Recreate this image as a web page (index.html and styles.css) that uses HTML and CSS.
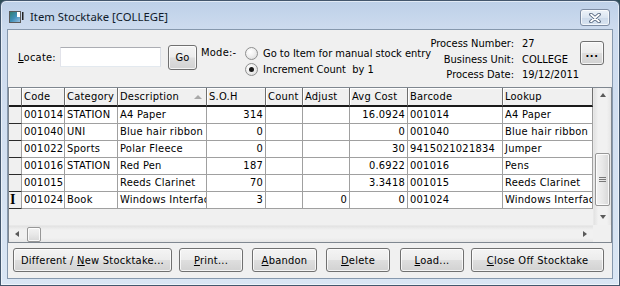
FILE: index.html
```html
<!DOCTYPE html>
<html lang="en">
<head>
    <meta charset="UTF-8">
    <title>Item Stocktake [COLLEGE]</title>
    <link rel="stylesheet" href="styles.css">
</head>
<body>

    <div class="window">

        <!-- Title bar -->
        <div class="titlebar">
            <svg class="app-icon" width="16" height="14" viewBox="0 0 16 14">
                <defs>
                    <linearGradient id="ico" x1="0" y1="0" x2="1" y2="1">
                        <stop offset="0" stop-color="#2f7d6a"/>
                        <stop offset="0.5" stop-color="#3f8fb8"/>
                        <stop offset="1" stop-color="#9fc4e6"/>
                    </linearGradient>
                </defs>
                <rect x="0.5" y="1.5" width="11" height="11" fill="url(#ico)" stroke="#5a5a5a"/>
                <rect x="8" y="2" width="3" height="5" fill="#ffffff"/>
                <rect x="13" y="2" width="1.5" height="8" fill="#222"/>
            </svg>
            <span class="title">Item Stocktake [COLLEGE]</span>
            <div class="close-btn">
                <svg width="12" height="10" viewBox="0 0 12 10">
                    <path d="M2 1.5 L10 8.5 M10 1.5 L2 8.5" stroke="#4b5d77" stroke-width="3.6" stroke-linecap="round"/>
                    <path d="M2 1.5 L10 8.5 M10 1.5 L2 8.5" stroke="#ffffff" stroke-width="1.8" stroke-linecap="round"/>
                </svg>
            </div>
        </div>

        <div class="client">

            <!-- Locate / mode / process info -->
            <div class="toolbar">
                <span class="locate-label"><u>L</u>ocate:</span>
                <div class="textbox"></div>
                <button class="btn go-btn">Go</button>
                <span class="mode-label">Mode:-</span>
                <div class="radios">
                    <div class="radio-row"><span class="radio"></span>Go to Item for manual stock entry</div>
                    <div class="radio-row"><span class="radio checked"></span>Increment Count&nbsp; by 1</div>
                </div>
                <div class="process">
                    <span class="p-label">Process Number:</span><span class="p-value">27</span>
                    <span class="p-label">Business Unit:</span><span class="p-value">COLLEGE</span>
                    <span class="p-label">Process Date:</span><span class="p-value">19/12/2011</span>
                </div>
                <button class="btn dots-btn">...</button>
            </div>

            <!-- Stock grid -->
            <div class="grid">
                <div class="grid-top">
                    <div class="grid-view">
                        <div class="row head">
                            <div class="cell ind"></div>
                            <div class="cell">Code</div>
                            <div class="cell">Category</div>
                            <div class="cell sorted">Description<span class="sort-arrow"></span></div>
                            <div class="cell">S.O.H</div>
                            <div class="cell">Count</div>
                            <div class="cell">Adjust</div>
                            <div class="cell">Avg Cost</div>
                            <div class="cell">Barcode</div>
                            <div class="cell">Lookup</div>
                        </div>
                        <div class="row">
                            <div class="cell ind"></div>
                            <div class="cell">001014</div>
                            <div class="cell">STATION</div>
                            <div class="cell">A4 Paper</div>
                            <div class="cell num">314</div>
                            <div class="cell num"></div>
                            <div class="cell num"></div>
                            <div class="cell num">16.0924</div>
                            <div class="cell">001014</div>
                            <div class="cell">A4 Paper</div>
                        </div>
                        <div class="row">
                            <div class="cell ind"></div>
                            <div class="cell">001040</div>
                            <div class="cell">UNI</div>
                            <div class="cell">Blue hair ribbon</div>
                            <div class="cell num">0</div>
                            <div class="cell num"></div>
                            <div class="cell num"></div>
                            <div class="cell num">0</div>
                            <div class="cell">001040</div>
                            <div class="cell">Blue hair ribbon</div>
                        </div>
                        <div class="row">
                            <div class="cell ind"></div>
                            <div class="cell">001022</div>
                            <div class="cell">Sports</div>
                            <div class="cell">Polar Fleece</div>
                            <div class="cell num">0</div>
                            <div class="cell num"></div>
                            <div class="cell num"></div>
                            <div class="cell num">30</div>
                            <div class="cell">9415021021834</div>
                            <div class="cell">Jumper</div>
                        </div>
                        <div class="row">
                            <div class="cell ind"></div>
                            <div class="cell">001016</div>
                            <div class="cell">STATION</div>
                            <div class="cell">Red Pen</div>
                            <div class="cell num">187</div>
                            <div class="cell num"></div>
                            <div class="cell num"></div>
                            <div class="cell num">0.6922</div>
                            <div class="cell">001016</div>
                            <div class="cell">Pens</div>
                        </div>
                        <div class="row">
                            <div class="cell ind"></div>
                            <div class="cell">001015</div>
                            <div class="cell"></div>
                            <div class="cell">Reeds Clarinet</div>
                            <div class="cell num">70</div>
                            <div class="cell num"></div>
                            <div class="cell num"></div>
                            <div class="cell num">3.3418</div>
                            <div class="cell">001015</div>
                            <div class="cell">Reeds Clarinet</div>
                        </div>
                        <div class="row">
                            <div class="cell ind"><span class="ibeam">I</span></div>
                            <div class="cell">001024</div>
                            <div class="cell">Book</div>
                            <div class="cell">Windows Interface</div>
                            <div class="cell num">3</div>
                            <div class="cell num"></div>
                            <div class="cell num">0</div>
                            <div class="cell num">0</div>
                            <div class="cell">001024</div>
                            <div class="cell">Windows Interface</div>
                        </div>
                    </div>
                    <div class="vscroll">
                        <span class="arrow up"></span>
                        <div class="vthumb"><span class="grip"></span></div>
                        <span class="arrow down"></span>
                    </div>
                </div>
                <div class="grid-bottom">
                    <div class="hscroll">
                        <span class="arrow left"></span>
                        <div class="hthumb"></div>
                        <span class="arrow right"></span>
                    </div>
                    <div class="corner"></div>
                </div>
            </div>

            <!-- Actions -->
            <div class="actions">
                <button class="btn act w-new">Different / <u>N</u>ew Stocktake...</button>
                <button class="btn act w-print"><u>P</u>rint...</button>
                <button class="btn act w-abandon"><u>A</u>bandon</button>
                <button class="btn act w-delete"><u>D</u>elete</button>
                <button class="btn act w-load"><u>L</u>oad...</button>
                <button class="btn act w-close"><u>C</u>lose Off Stocktake</button>
            </div>

        </div>
    </div>

</body>
</html>
```

FILE: styles.css
```css
* {
    margin: 0;
    padding: 0;
    box-sizing: border-box;
}

body {
    width: 620px;
    height: 286px;
    overflow: hidden;
    background: #2e4c57;
    font-family: "DejaVu Sans Condensed", "Liberation Sans", sans-serif;
    font-size: 11px;
    letter-spacing: 0.25px;
    color: #000;
}

/* Window frame */
.window {
    width: 620px;
    height: 286px;
    display: flex;
    flex-direction: column;
    padding: 0 6px 6px;
    border: 1px solid #44576d;
    border-radius: 6px 6px 0 0;
    background: linear-gradient(to bottom, #bdd0e8 0, #cddbee 28px, #dae6f4 100%);
    box-shadow: inset 0 0 0 1px rgba(255, 255, 255, 0.55);
}

.titlebar {
    height: 28px;
    flex-shrink: 0;
    display: flex;
    align-items: flex-start;
}

.app-icon {
    margin: 9px 0 0 2px;
}

.title {
    margin: 8px 0 0 5px;
    font-family: "Noto Sans", "Liberation Sans", sans-serif;
    font-size: 11.3px;
    letter-spacing: 0;
    line-height: 16px;
    color: #0f1a2a;
}

.close-btn {
    margin: 8px 3px 0 auto;
    width: 30px;
    height: 17px;
    display: flex;
    justify-content: center;
    align-items: center;
    border: 1px solid #7d8ca3;
    border-radius: 3px;
    background: linear-gradient(to bottom, #eef3f9 0%, #dbe5f1 50%, #ccd9ea 51%, #d9e4f1 100%);
    box-shadow: inset 0 0 0 1px rgba(255, 255, 255, 0.7);
}

.client {
    flex: 1;
    display: flex;
    flex-direction: column;
    border: 1px solid #8698ad;
    background: #f0f0f0;
}

/* Buttons */
.btn {
    font: inherit;
    letter-spacing: inherit;
    color: #000;
    border: 1px solid #707070;
    border-radius: 3px;
    background: linear-gradient(to bottom, #f4f4f4 0%, #ececec 48%, #dedede 52%, #d2d2d2 100%);
    box-shadow: inset 0 0 0 1px rgba(255, 255, 255, 0.75);
}

/* Toolbar */
.toolbar {
    height: 57px;
    flex-shrink: 0;
    display: flex;
    align-items: flex-start;
}

.toolbar > * {
    flex-shrink: 0;
}

.locate-label {
    width: 42px;
    margin: 21px 0 0 10px;
    line-height: 13px;
}

.textbox {
    width: 101px;
    height: 20px;
    margin-top: 17px;
    background: #fff;
    border: 1px solid;
    border-color: #abadb3 #dbdfe6 #e3e9ef #e2e3ea;
}

.go-btn {
    width: 29px;
    height: 25px;
    margin: 15px 0 0 7px;
}

.mode-label {
    width: 44px;
    margin: 16px 0 0 4px;
    line-height: 13px;
}

.toolbar > .radios {
    flex-shrink: 1;
    min-width: 0;
    margin-top: 15px;
    letter-spacing: 0;
    white-space: nowrap;
}

.radio-row {
    height: 16px;
    display: flex;
    align-items: center;
}

.radio {
    width: 13px;
    height: 13px;
    flex-shrink: 0;
    margin-right: 5px;
    border: 1px solid #8e8f8f;
    border-radius: 50%;
    background: radial-gradient(circle at 40% 35%, #ffffff 0, #f2f2f2 40%, #d6d6d6 100%);
    display: flex;
    justify-content: center;
    align-items: center;
}

.radio.checked::after {
    content: "";
    width: 5px;
    height: 5px;
    border-radius: 50%;
    background: #1b1b1b;
}

.process {
    margin: 6px 0 0 auto;
    display: grid;
    grid-template-columns: 90px 56px;
    column-gap: 8px;
    line-height: 15.5px;
    letter-spacing: 0;
    white-space: nowrap;
}

.p-label {
    text-align: right;
}

.dots-btn {
    width: 24px;
    height: 24px;
    margin: 11px 8px 0 2px;
    font-weight: bold;
    letter-spacing: 0.5px;
}

/* Grid */
.grid {
    height: 156px;
    flex-shrink: 0;
    border: 1px solid #7f8790;
    background: #f0f0f0;
    display: flex;
    flex-direction: column;
}

.grid-top {
    height: 137px;
    display: flex;
}

.grid-view {
    width: 584px;
    overflow: hidden;
}

.row {
    display: grid;
    grid-template-columns: 13px 43px 53px 89px 59px 37px 47px 58px 95px 90px;
    height: 17px;
}

.cell {
    background: #fff;
    border-right: 1px solid #a0a0a0;
    border-bottom: 1px solid #a0a0a0;
    padding: 0 2px;
    line-height: 16px;
    white-space: nowrap;
    overflow: hidden;
}

.cell.num {
    text-align: right;
}

.cell.ind {
    background: #f0f0f0;
    border-bottom-color: #2a2a2a;
    position: relative;
}

.row.head {
    height: 19px;
}

.row.head .cell {
    background: #f0f0f0;
    border-right-color: #6e6e6e;
    border-bottom: 2px solid #1a1a1a;
    line-height: 17px;
    box-shadow: inset 1px 1px 0 #ffffff;
}

.cell.sorted {
    position: relative;
}

.sort-arrow {
    position: absolute;
    right: 4px;
    top: 7px;
    border-left: 4px solid transparent;
    border-right: 4px solid transparent;
    border-bottom: 4px solid #a8a8a8;
}

.ibeam {
    position: absolute;
    left: 1px;
    top: 0;
    font-family: "Liberation Serif", serif;
    font-weight: bold;
    font-size: 14px;
    line-height: 16px;
}

/* Scrollbars */
.vscroll {
    width: 18px;
    display: flex;
    flex-direction: column;
    align-items: center;
    background: linear-gradient(to right, #e2e2e2, #f1f1f1 25%, #f1f1f1 75%, #e6e6e6);
    border-left: 1px solid #e8e8e8;
}

.arrow {
    width: 0;
    height: 0;
    border: 3.5px solid transparent;
}

.arrow.up {
    margin-top: 5px;
    border-top: 0;
    border-bottom: 4px solid #5a5a5a;
}

.arrow.down {
    margin-top: auto;
    margin-bottom: 6px;
    border-bottom: 0;
    border-top: 4px solid #5a5a5a;
}

.vthumb {
    width: 15px;
    height: 53px;
    margin-top: 56px;
    border: 1px solid #979797;
    border-radius: 2px;
    background: linear-gradient(to right, #f3f3f3, #e8e8e8 50%, #d8d8d8);
    box-shadow: inset 0 0 0 1px rgba(255, 255, 255, 0.8);
    display: flex;
    justify-content: center;
    align-items: center;
}

.grip {
    width: 7px;
    height: 5px;
    border-top: 1px solid #777;
    border-bottom: 1px solid #777;
    background: linear-gradient(to bottom, transparent 1px, #777 1px, #777 2px, transparent 2px);
}

.grid-bottom {
    height: 17px;
    display: flex;
}

.hscroll {
    width: 584px;
    display: flex;
    align-items: center;
    background: linear-gradient(to bottom, #e2e2e2, #f1f1f1 25%, #f1f1f1 75%, #e6e6e6);
    border-top: 1px solid #e8e8e8;
}

.arrow.left {
    margin-left: 6px;
    border-left: 0;
    border-right: 4px solid #5a5a5a;
}

.arrow.right {
    margin: 0 6px 0 auto;
    border-right: 0;
    border-left: 4px solid #5a5a5a;
}

.hthumb {
    width: 14px;
    height: 15px;
    margin-left: 8px;
    border: 1px solid #979797;
    border-radius: 2px;
    background: linear-gradient(to bottom, #f3f3f3, #e8e8e8 50%, #d8d8d8);
    box-shadow: inset 0 0 0 1px rgba(255, 255, 255, 0.8);
}

.corner {
    width: 18px;
    background: #f0f0f0;
}

/* Bottom buttons */
.actions {
    display: flex;
    margin-top: 5px;
    padding-left: 5px;
}

.act {
    height: 24px;
}

.w-new { width: 159px; }
.w-print { width: 64px; margin-left: 7px; }
.w-abandon { width: 65px; margin-left: 9px; }
.w-delete { width: 64px; margin-left: 9px; }
.w-load { width: 64px; margin-left: 10px; }
.w-close { width: 133px; margin-left: 7px; }
```
